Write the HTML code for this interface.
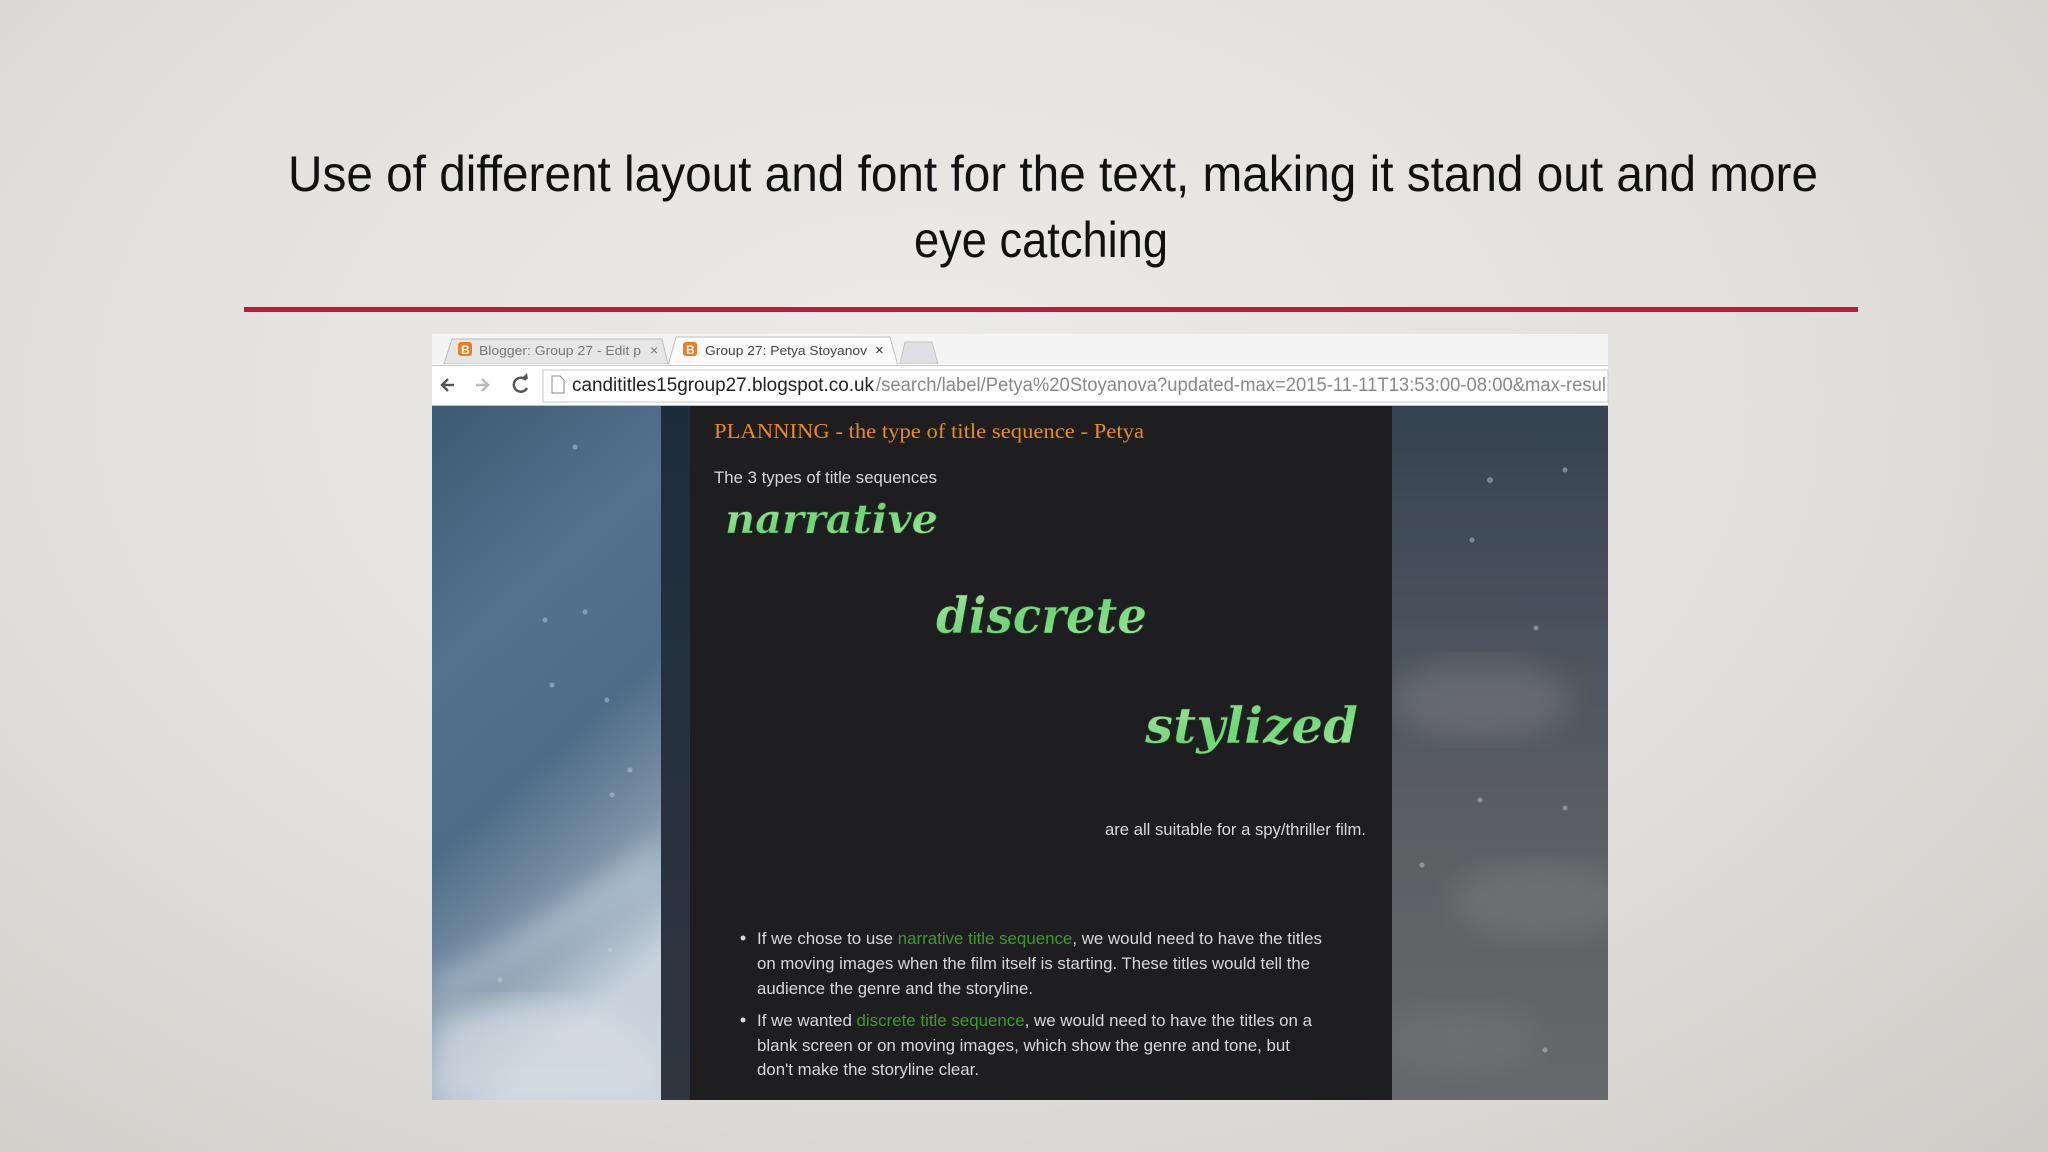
<!DOCTYPE html>
<html><head><meta charset="utf-8"><style>
html,body{margin:0;padding:0;width:2048px;height:1152px;overflow:hidden}
body{background:radial-gradient(ellipse at 45% 35%,#ecebe8 0%,#e2e0dc 55%,#cfccc8 100%)}
svg{position:absolute;left:0;top:0}
</style></head><body>
<svg width="2048" height="1152" viewBox="0 0 2048 1152" xmlns="http://www.w3.org/2000/svg">
<defs>
<linearGradient id="lb" x1="0" y1="0" x2="0.3" y2="1">
<stop offset="0" stop-color="#3d5a74"/><stop offset="0.35" stop-color="#54728e"/><stop offset="0.6" stop-color="#4e6c88"/><stop offset="0.8" stop-color="#7d92a6"/><stop offset="1" stop-color="#c7d2dc"/></linearGradient>
<linearGradient id="rb" x1="0" y1="0" x2="0" y2="1">
<stop offset="0" stop-color="#35424f"/><stop offset="0.3" stop-color="#48525d"/><stop offset="0.6" stop-color="#5c5e63"/><stop offset="1" stop-color="#66686c"/></linearGradient>
<linearGradient id="gr" x1="0" y1="0" x2="1" y2="1">
<stop offset="0" stop-color="#b2e4a8"/><stop offset="0.5" stop-color="#6cd575"/><stop offset="1" stop-color="#a6e6a2"/></linearGradient>
<linearGradient id="strip" x1="0" y1="0" x2="0" y2="1"><stop offset="0" stop-color="#1d2c3c"/><stop offset="1" stop-color="#2f3640"/></linearGradient>
<filter id="bl"><feGaussianBlur stdDeviation="14"/></filter>
</defs>
<text x="1053" y="191" text-anchor="middle" font-family="Liberation Sans, sans-serif" font-size="50" fill="#111" textLength="1530" lengthAdjust="spacingAndGlyphs">Use of different layout and font for the text, making it stand out and more</text>
<text x="1041" y="257" text-anchor="middle" font-family="Liberation Sans, sans-serif" font-size="50" fill="#111" textLength="254" lengthAdjust="spacingAndGlyphs">eye catching</text>
<rect x="244" y="307" width="1614" height="5" fill="#c0193e"/>

<!-- browser -->
<rect x="432" y="334" width="1176" height="766" fill="#f2f2f2"/>
<rect x="432" y="334" width="1176" height="32" fill="#f4f4f4"/>
<path d="M444 364 L452 339 H662 L668 364 Z" fill="#e6e6e6" stroke="#bdbdbd"/>
<path d="M668 366 L676 337 H890 L898 366 Z" fill="#fbfbfb" stroke="#bdbdbd"/>
<path d="M900 364 L905 342 H932 L938 364 Z" fill="#e0e0e4" stroke="#c4c4c4"/>
<rect x="432" y="364" width="1176" height="42" fill="#fff"/>
<line x1="432" y1="365.5" x2="1608" y2="365.5" stroke="#c8c8c8"/>
<rect x="458" y="342" width="14" height="14" rx="3" fill="#f07c22"/>
<text x="461" y="354" font-family="Liberation Sans, sans-serif" font-size="12" font-weight="bold" fill="#fff">B</text>
<text x="479" y="355" font-family="Liberation Sans, sans-serif" font-size="13" fill="#777" textLength="162" lengthAdjust="spacingAndGlyphs">Blogger: Group 27 - Edit p</text>
<text x="650" y="355" font-family="Liberation Sans, sans-serif" font-size="14" fill="#777">×</text>
<rect x="683" y="342" width="14" height="14" rx="3" fill="#f07c22"/>
<text x="686" y="354" font-family="Liberation Sans, sans-serif" font-size="12" font-weight="bold" fill="#fff">B</text>
<text x="705" y="355" font-family="Liberation Sans, sans-serif" font-size="13" fill="#444" textLength="162" lengthAdjust="spacingAndGlyphs">Group 27: Petya Stoyanov</text>
<text x="875" y="355" font-family="Liberation Sans, sans-serif" font-size="15" fill="#333">×</text>
<path d="M454 385 H442 M448 379 L442 385 L448 391" stroke="#555" stroke-width="2.5" fill="none"/>
<path d="M488 385 H476 M482 379 L488 385 L482 391" stroke="#bbb" stroke-width="2.5" fill="none"/>
<path d="M526 380 A7 7 0 1 0 527 388" stroke="#555" stroke-width="2.5" fill="none"/><path d="M522 378 L528 379 L527 373" fill="#555"/>
<rect x="543" y="370" width="1065" height="32" fill="#fff" stroke="#c9c9c9"/>
<path d="M552 376 H560 L564 380 V393 H552 Z" fill="none" stroke="#888"/>
<text x="572" y="391" font-family="Liberation Sans, sans-serif" font-size="19" fill="#222" textLength="302" lengthAdjust="spacingAndGlyphs">candititles15group27.blogspot.co.uk</text>
<text x="876" y="391" font-family="Liberation Sans, sans-serif" font-size="19" fill="#888" textLength="730" lengthAdjust="spacingAndGlyphs">/search/label/Petya%20Stoyanova?updated-max=2015-11-11T13:53:00-08:00&amp;max-resul</text>
<line x1="432" y1="405.5" x2="1608" y2="405.5" stroke="#c0c0c0"/>

<svg x="432" y="406" width="232" height="694" viewBox="432 406 232 694">
<rect x="432" y="406" width="232" height="694" fill="url(#lb)"/>
<path d="M432 1010 Q520 960 600 920 Q640 900 664 880 L664 840 Q600 880 540 920 Q480 960 432 980 Z" fill="#b3c4d3" opacity="0.7" filter="url(#bl)"/>
<path d="M432 1100 V1020 Q520 990 600 1010 Q640 1030 664 1060 V1100 Z" fill="#d5dde4" opacity="0.7" filter="url(#bl)"/>
</svg>
<svg x="1392" y="406" width="216" height="694" viewBox="1392 406 216 694">
<rect x="1392" y="406" width="216" height="694" fill="url(#rb)"/>
<ellipse cx="1480" cy="700" rx="90" ry="40" fill="#7a7c80" opacity="0.5" filter="url(#bl)"/>
<ellipse cx="1540" cy="900" rx="90" ry="40" fill="#808286" opacity="0.4" filter="url(#bl)"/>
<ellipse cx="1460" cy="1040" rx="80" ry="35" fill="#77797d" opacity="0.4" filter="url(#bl)"/>
</svg>
<g fill="#c9d4de" opacity="0.45">
<circle cx="575" cy="447" r="2.5"/><circle cx="545" cy="620" r="2.5"/><circle cx="585" cy="612" r="2.5"/><circle cx="552" cy="685" r="2.5"/><circle cx="607" cy="700" r="2.5"/><circle cx="630" cy="770" r="2.5"/><circle cx="612" cy="795" r="2.5"/><circle cx="610" cy="950" r="2.5"/><circle cx="500" cy="980" r="2.5"/>
<circle cx="1490" cy="480" r="3"/><circle cx="1472" cy="540" r="2.5"/><circle cx="1565" cy="470" r="2.5"/><circle cx="1536" cy="628" r="2.5"/><circle cx="1480" cy="800" r="2.5"/><circle cx="1565" cy="808" r="2.5"/><circle cx="1422" cy="865" r="2.5"/><circle cx="1545" cy="1050" r="2.5"/>
</g>
<rect x="661" y="406" width="29" height="694" fill="url(#strip)"/>
<rect x="690" y="406" width="702" height="694" fill="#1e1e20"/>

<text x="714" y="438" font-family="Liberation Serif, serif" font-size="21" fill="#e88a1c" textLength="430" lengthAdjust="spacingAndGlyphs">PLANNING - the type of title sequence - Petya</text>
<text x="714" y="483" font-family="Liberation Sans, sans-serif" font-size="17" fill="#d8d8d8" textLength="223" lengthAdjust="spacingAndGlyphs">The 3 types of title sequences</text>
<g font-family="DejaVu Serif, serif" font-style="italic" font-weight="bold" fill="url(#gr)" stroke="#2a4a2a" stroke-width="0.6">
<text x="725" y="533" font-size="40" textLength="213" lengthAdjust="spacingAndGlyphs">narrative</text>
<text x="936" y="633" font-size="50" textLength="211" lengthAdjust="spacingAndGlyphs">discrete</text>
<text x="1145" y="743" font-size="50" textLength="213" lengthAdjust="spacingAndGlyphs">stylized</text>
</g>
<text x="1366" y="835" text-anchor="end" font-family="Liberation Sans, sans-serif" font-size="17" fill="#d8d8d8" textLength="261" lengthAdjust="spacingAndGlyphs">are all suitable for a spy/thriller film.</text>

<g font-family="Liberation Sans, sans-serif" font-size="17" fill="#d8d8d8">
<circle cx="743" cy="938" r="2.5"/>
<text x="757" y="944" textLength="565" lengthAdjust="spacingAndGlyphs">If we chose to use <tspan fill="#3f9a2c">narrative title sequence</tspan>, we would need to have the titles</text>
<text x="757" y="969" textLength="553" lengthAdjust="spacingAndGlyphs">on moving images when the film itself is starting. These titles would tell the</text>
<text x="757" y="994" textLength="276" lengthAdjust="spacingAndGlyphs">audience the genre and the storyline.</text>
<circle cx="743" cy="1020" r="2.5"/>
<text x="757" y="1026" textLength="555" lengthAdjust="spacingAndGlyphs">If we wanted <tspan fill="#3f9a2c">discrete title sequence</tspan>, we would need to have the titles on a</text>
<text x="757" y="1051" textLength="533" lengthAdjust="spacingAndGlyphs">blank screen or on moving images, which show the genre and tone, but</text>
<text x="757" y="1075" textLength="222" lengthAdjust="spacingAndGlyphs">don't make the storyline clear.</text>
</g>
</svg>
</body></html>
